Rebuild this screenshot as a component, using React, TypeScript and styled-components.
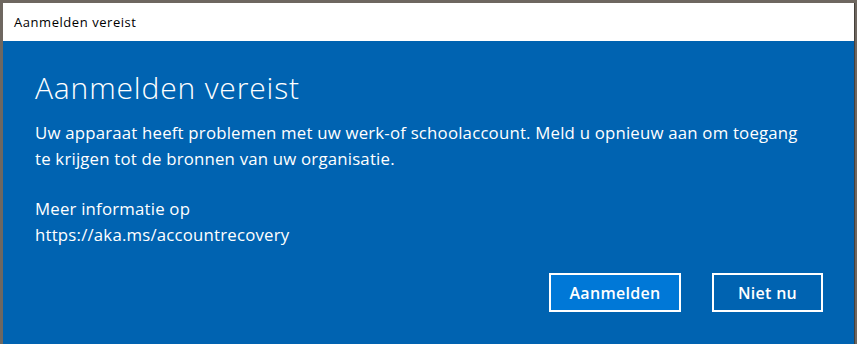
import React from 'react';
import styled, { createGlobalStyle } from 'styled-components';

const GlobalStyle = createGlobalStyle`
  html, body {
    margin: 0;
    padding: 0;
    background: #6e6760;
  }
  body {
    font-family: "Open Sans", "Noto Sans", sans-serif;
    overflow: hidden;
  }
`;

const Frame = styled.div`
  width: 857px;
  height: 344px;
  box-sizing: border-box;
  padding: 3px 2px 0 3px;
  background: #6e6760;
  display: flex;
`;

const Window = styled.div`
  flex: 1;
  min-width: 0;
  display: flex;
  flex-direction: column;
  border-right: 1px solid #45403b;
`;

const TitleBar = styled.div`
  height: 38px;
  background: #ffffff;
  display: flex;
  align-items: center;
  padding-left: 11px;
  font-size: 13px;
  letter-spacing: 0.55px;
  color: #000;
`;

const Body = styled.div`
  flex: 1;
  min-width: 0;
  background: #0063b1;
  color: #ffffff;
  padding: 26px 31px 0 32px;
  display: flex;
  flex-direction: column;
`;

const Heading = styled.h1`
  margin: 0 0 11px 0;
  font-size: 30px;
  font-weight: 300;
  letter-spacing: 0.85px;
  line-height: 42px;
`;

const Paragraph = styled.p<{ $gap?: number }>`
  margin: 0 0 ${({ $gap }) => $gap ?? 0}px 0;
  font-size: 16.8px;
  letter-spacing: 0.2px;
  line-height: 25.5px;
  font-weight: 400;
  white-space: nowrap;
`;

const Actions = styled.div`
  display: flex;
  justify-content: flex-end;
  gap: 31px;
  margin-top: 26px;
`;

const Button = styled.button<{ $primary?: boolean; $width: number }>`
  width: ${({ $width }) => $width}px;
  height: 39px;
  box-sizing: border-box;
  border: 2px solid #ffffff;
  background: ${({ $primary }) => ($primary ? '#0078d7' : '#0063b1')};
  color: #ffffff;
  font-family: "Open Sans", "Noto Sans", sans-serif;
  font-size: 16px;
  font-weight: 600;
  letter-spacing: 0.3px;
  cursor: pointer;
`;

const App: React.FC = () => {
  return (
    <>
      <GlobalStyle />
      <Frame>
        <Window>
          <TitleBar>Aanmelden vereist</TitleBar>
          <Body>
            <Heading>Aanmelden vereist</Heading>
            <Paragraph $gap={25}>
              Uw apparaat heeft problemen met uw werk-of schoolaccount. Meld u opnieuw aan om toegang
              <br />
              te krijgen tot de bronnen van uw organisatie.
            </Paragraph>
            <Paragraph>
              Meer informatie op
              <br />
              https://aka.ms/accountrecovery
            </Paragraph>
            <Actions>
              <Button $primary $width={132}>Aanmelden</Button>
              <Button $width={111}>Niet nu</Button>
            </Actions>
          </Body>
        </Window>
      </Frame>
    </>
  );
};

export default App;
